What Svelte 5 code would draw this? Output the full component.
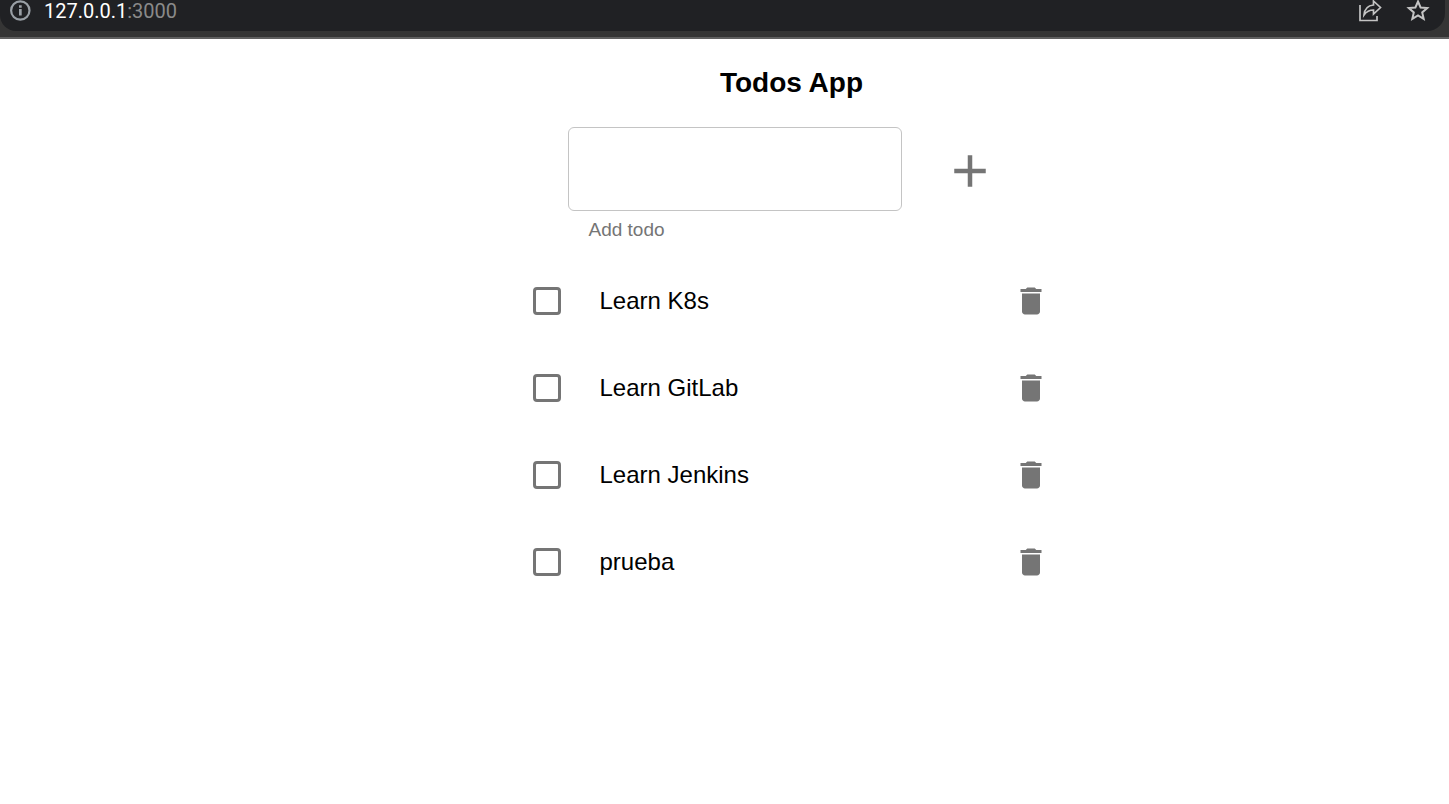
<script>
  let draft = $state('');
  let todos = $state([
    { text: 'Learn K8s', done: false },
    { text: 'Learn GitLab', done: false },
    { text: 'Learn Jenkins', done: false },
    { text: 'prueba', done: false }
  ]);
  function add(e) {
    e.preventDefault();
    if (draft.trim()) todos.push({ text: draft.trim(), done: false });
    draft = '';
  }
</script>

<header>
  <div class="address">
    <svg class="info" viewBox="0 0 22 22" aria-hidden="true"><circle cx="11.300" cy="10.500" r="9.200" fill="none" stroke="currentColor" stroke-width="2.200" /><path d="M10 9h2.700v6.500H10zM10 5.300h2.700v2.400H10z" fill="currentColor" /></svg>
    <span class="url">127.0.0.1<span class="port">:3000</span></span>
    <button class="tool" aria-label="Share"><svg viewBox="0 0 24 24"><path d="M2 5v15.500h17V16" fill="none" stroke="currentColor" stroke-width="1.700" /><path d="M15.500 1l7 6.500-7 6.500v-4c-4 0-7 1.500-9.500 5 .5-5.500 3.500-9.500 9.500-10z" fill="none" stroke="currentColor" stroke-width="1.700" /></svg></button>
    <button class="tool" aria-label="Bookmark"><svg viewBox="0 0 24 24"><path d="M12 1.500l2.600 6 6.600.6-5 4.300 1.500 6.500-5.700-3.400-5.700 3.400 1.500-6.500-5-4.300 6.600-.6z" fill="none" stroke="currentColor" stroke-width="2" /></svg></button>
  </div>
</header>

<main>
  <h1>Todos App</h1>
  <form onsubmit={add}>
    <div class="field">
      <input id="todo" type="text" bind:value={draft} />
      <label for="todo">Add todo</label>
    </div>
    <button class="add" aria-label="Add"><svg viewBox="0 0 24 24"><path d="M19 13h-6v6h-2v-6H5v-2h6V5h2v6h6v2z" fill="currentColor" /></svg></button>
  </form>
  <ul>
    {#each todos as todo, i}
      <li>
        <label class="item"><input type="checkbox" bind:checked={todo.done} /><span>{todo.text}</span></label>
        <button class="delete" aria-label="Delete {todo.text}" onclick={() => todos.splice(i, 1)}><svg viewBox="0 0 24 24"><path d="M6 19c0 1.100.9 2 2 2h8c1.100 0 2-.9 2-2V7H6v12zM19 4h-3.500l-1-1h-5l-1 1H5v2h14V4z" fill="currentColor" /></svg></button>
      </li>
    {/each}
  </ul>
</main>

<style>
  :global(body) { background: #fff; font-family: "Liberation Sans", Arial, sans-serif; }
  header { background: #353535; padding: 0 4px 6px 0; border-bottom: 2px solid #606060; }
  .address { display: flex; align-items: flex-start; height: 31px; padding: 0 15px 0 9px; background: #202124; border-radius: 0 0 18px 16px; color: #9aa0a6; }
  .info { width: 22px; height: 22px; }
  .url { flex: 1; margin-left: 13px; font: 20px/23px Roboto, sans-serif; color: #fff; }
  .port { color: #8a8a8a; }
  button { display: grid; place-items: center; padding: 0; border: 0; background: none; color: #757575; cursor: pointer; }
  .tool { width: 24px; height: 24px; color: #c4c4c4; }
  .tool + .tool { margin-left: 24px; }
  .tool svg { width: 24px; height: 24px; }
  main { width: 532px; max-width: 100%; margin: 0 auto; padding-left: 134px; box-sizing: content-box; }
  h1 { margin: 0; padding-top: 28px; font-size: 28px; line-height: 32px; text-align: center; }
  form { display: flex; padding: 28px 0 0 42px; }
  .field { width: 334px; }
  .field input { display: block; box-sizing: border-box; width: 100%; height: 84px; padding: 0 20px; border: 1px solid #c4c4c4; border-radius: 6px; font: 24px "Liberation Sans", sans-serif; }
  .field label { display: block; padding: 8px 21px 0; font-size: 19px; line-height: 22px; color: #757575; }
  .add { width: 54px; height: 54px; margin: 17px 0 0 41px; }
  .add svg { width: 54px; height: 54px; }
  ul { list-style: none; margin: 0; padding: 16px 9px 0 0; }
  li { display: flex; align-items: center; height: 87px; }
  .item { display: flex; align-items: center; flex: 1; gap: 39px; font-size: 24px; line-height: 36px; }
  .item input { appearance: none; box-sizing: border-box; width: 28px; height: 28px; margin: 0 0 0 7px; border: 3px solid #757575; border-radius: 4px; }
  .item input:checked { background: #1976d2; border-color: #1976d2; }
  .delete { width: 36px; height: 36px; }
  .delete svg { width: 36px; height: 36px; }
</style>
